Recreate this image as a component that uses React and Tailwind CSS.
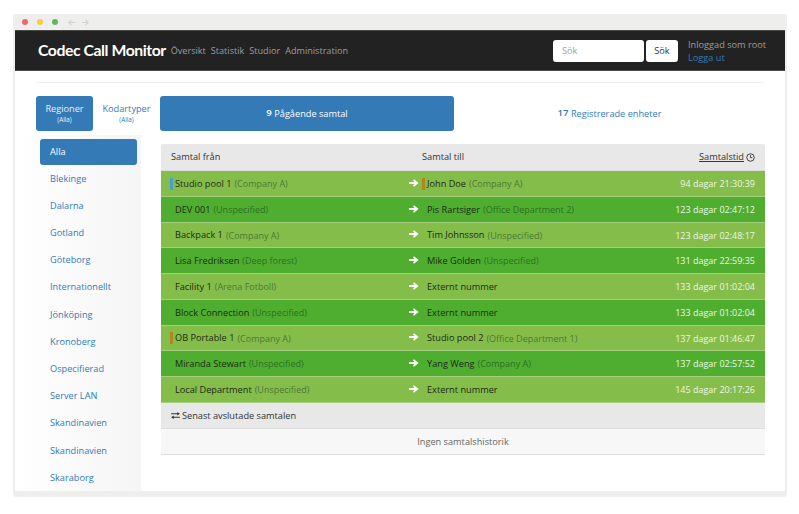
import React from "react";

const regions = ["Blekinge","Dalarna","Gotland","Göteborg","Internationellt","Jönköping","Kronoberg","Ospecifierad","Server LAN","Skandinavien","Skandinavien","Skaraborg"];

const rows = [
  ["Studio pool 1","Company A","John Doe","Company A","94 dagar 21:30:39","#4a9ed0","#b5841c"],
  ["DEV 001","Unspecified","Pis Rartsiger","Office Department 2","123 dagar 02:47:12"],
  ["Backpack 1","Company A","Tim Johnsson","Unspecified","123 dagar 02:48:17"],
  ["Lisa Fredriksen","Deep forest","Mike Golden","Unspecified","131 dagar 22:59:35"],
  ["Facility 1","Arena Fotboll","Externt nummer",null,"133 dagar 01:02:04"],
  ["Block Connection","Unspecified","Externt nummer",null,"133 dagar 01:02:04"],
  ["OB Portable 1","Company A","Studio pool 2","Office Department 1","137 dagar 01:46:47","#b5841c"],
  ["Miranda Stewart","Unspecified","Yang Weng","Company A","137 dagar 02:57:52"],
  ["Local Department","Unspecified","Externt nummer",null,"145 dagar 20:17:26"],
];

function Arrow({ className }) {
  return (
    <svg viewBox="0 0 10 8" className={className} fill="currentColor">
      <path d="M0 3h5.4L4 1.3 5 .2 9.6 4 5 7.8 4 6.7 5.4 5H0z" />
    </svg>
  );
}

function Cell({ name, org, mark, dark }) {
  return (
    <div className="flex items-center h-full">
      <span className="w-[3px] h-[12px] mr-[2px] shrink-0" style={{ background: mark || "transparent" }} />
      <span className="text-[#1c2b14] whitespace-nowrap">{name}</span>
      {org && <span className={`ml-[3px] whitespace-nowrap text-[9px] ${dark ? "text-[#2c7020]" : "text-[#4a7a33]"}`}>({org})</span>}
    </div>
  );
}

export default function App() {
  return (
    <div className="w-[799px] h-[514px] bg-white pt-[14px] pl-[13px] pr-[12px] pb-[17px] overflow-hidden font-['Open_Sans',sans-serif] text-[9.2px]">
      <div className="h-full bg-[#eeeeed] rounded-[3px] px-[2px] pb-[6px] flex flex-col">
        <div className="h-[16px] shrink-0 flex items-center pl-[7px]">
          <span className="w-[6px] h-[6px] rounded-full bg-[#f2666a]" />
          <span className="w-[6px] h-[6px] rounded-full bg-[#f8cf3b] ml-[9px]" />
          <span className="w-[6px] h-[6px] rounded-full bg-[#5fb95a] ml-[9px]" />
          <svg viewBox="0 0 8 8" className="w-[7px] h-[7px] ml-[10px] text-[#d3d3d3]" fill="none" stroke="currentColor" strokeWidth="1.3"><path d="M8 4H1M4 1 1 4l3 3" /></svg>
          <svg viewBox="0 0 8 8" className="w-[7px] h-[7px] ml-[7px] text-[#d3d3d3]" fill="none" stroke="currentColor" strokeWidth="1.3"><path d="M0 4h7M4 1l3 3-3 3" /></svg>
        </div>

        <header className="h-[41px] shrink-0 bg-[#222222] border-t border-b border-[#4a4a4a] flex items-center pl-[23px] pr-[20px]">
          <span className="font-['Lato',sans-serif] font-bold text-white text-[15.8px] tracking-[-0.45px] whitespace-nowrap -mt-[1px]">Codec Call Monitor</span>
          <nav className="flex gap-[5px] ml-[5px] text-[#9d9d9d] text-[9.1px]">
            <span>Översikt</span><span>Statistik</span><span>Studior</span><span>Administration</span>
          </nav>
          <div className="ml-auto flex items-center">
            <div className="w-[91px] h-[22px] bg-white rounded-[3px] pl-[9px] flex items-center text-[#a0a0a0]">Sök</div>
            <div className="w-[32px] h-[22px] bg-white rounded-[3px] ml-[2px] flex items-center justify-center text-[#333]">Sök</div>
            <div className="ml-[10px] w-[77px] leading-[13px]">
              <div className="text-[#9d9d9d] whitespace-nowrap">Inloggad som root</div>
              <div className="text-[#337ab7]">Logga ut</div>
            </div>
          </div>
        </header>

        <main className="flex-1 min-h-0 bg-white overflow-hidden flex flex-col">
          <div className="h-px mt-[11px] mx-[21px] bg-[#eeeeee] shrink-0" />
          <div className="flex mt-[13px] pr-[20px] min-h-0 flex-1">
            <div className="w-[145px] shrink-0 min-h-0">
              <div className="flex pl-[21px] h-[35px]">
                <div className="w-[57px] shrink-0 bg-[#337ab7] rounded-[3px] text-[#e8f0f7] flex flex-col items-center pt-[7px]">
                  <span className="leading-[11px]">Regioner</span>
                  <span className="text-[6.3px] leading-[10px] mt-[1px]">(Alla)</span>
                </div>
                <div className="w-[67px] shrink-0 text-[#337ab7] flex flex-col items-center pt-[7px]">
                  <span className="leading-[11px]">Kodartyper</span>
                  <span className="text-[6.3px] leading-[10px] mt-[1px]">(Alla)</span>
                </div>
              </div>
              <div className="w-[126px] mt-[4px] h-[400px] bg-gradient-to-r from-white to-[#f5f5f5] pt-[4px] pl-[25px] pr-[4px]">
                <div className="h-[26px] bg-[#337ab7] rounded-[3px] text-white flex items-center pl-[10px]">Alla</div>
                {regions.map((r, i) => (
                  <div key={i} className="h-[27.2px] pl-[10px] flex items-center text-[#337ab7]">{r}</div>
                ))}
              </div>
            </div>

            <div className="flex-1 min-w-0">
              <div className="flex h-[35px]">
                <div className="w-[294px] bg-[#337ab7] rounded-[3px] text-white flex items-center justify-center">
                  <b className="font-semibold text-[9.6px]">9</b>&nbsp;Pågående samtal
                </div>
                <div className="flex-1 text-[#337ab7] flex items-center justify-center">
                  <b className="font-semibold text-[9.6px]">17</b>&nbsp;Registrerade enheter
                </div>
              </div>

              <div className="mt-[13px] ml-px">
                <div className="h-[27px] bg-[#e8e8e8] rounded-t-[2px] flex items-center pl-[10px] pr-[10px] text-[#333] border-b border-[#dcdcdc]">
                  <span className="w-[251px]">Samtal från</span>
                  <span>Samtal till</span>
                  <span className="ml-auto underline">Samtalstid</span>
                  <svg viewBox="0 0 12 12" className="w-[9px] h-[9px] ml-[2px]" fill="none" stroke="currentColor" strokeWidth="1.2"><circle cx="6" cy="6" r="5" /><path d="M6 3v3.2h2.4" /></svg>
                </div>
                {rows.map((r, i) => (
                  <div key={i} className={`h-[25.75px] pt-[1px] flex items-center pl-[9px] pr-[10px] border-b border-[#a3cf7f] ${i % 2 ? "bg-[#4fae30]" : "bg-[#85bd4a]"}`}>
                    <div className="w-[238px] h-full"><Cell name={r[0]} org={r[1]} mark={r[5]} dark={i % 2 === 1} /></div>
                    <Arrow className="w-[10px] h-[8px] text-white ml-[1px] mr-[3px] -mt-[2px]" />
                    <div className="h-full"><Cell name={r[2]} org={r[3]} mark={r[6]} dark={i % 2 === 1} /></div>
                    <span className="ml-auto text-[#eef6e4] text-[9px]">{r[4]}</span>
                  </div>
                ))}
                <div className="h-[26px] pt-[2px] bg-[#e8e8e8] flex items-center pl-[10px] text-[#333] border-b border-[#dedede]">
                  <svg viewBox="0 0 10 8" className="w-[9px] h-[7px] mr-[2px] -mt-[2px] text-[#333]" fill="currentColor"><path d="M0 1.5h7V0l3 2-3 2V2.5H0zM10 5.5H3V4L0 6l3 2V6.5h7z" /></svg>
                  Senast avslutade samtalen
                </div>
                <div className="h-[26px] pt-[2px] bg-[#f7f7f7] border-b border-[#dddddd] flex items-center justify-center text-[#666]">Ingen samtalshistorik</div>
              </div>
            </div>
          </div>
        </main>
      </div>
    </div>
  );
}
